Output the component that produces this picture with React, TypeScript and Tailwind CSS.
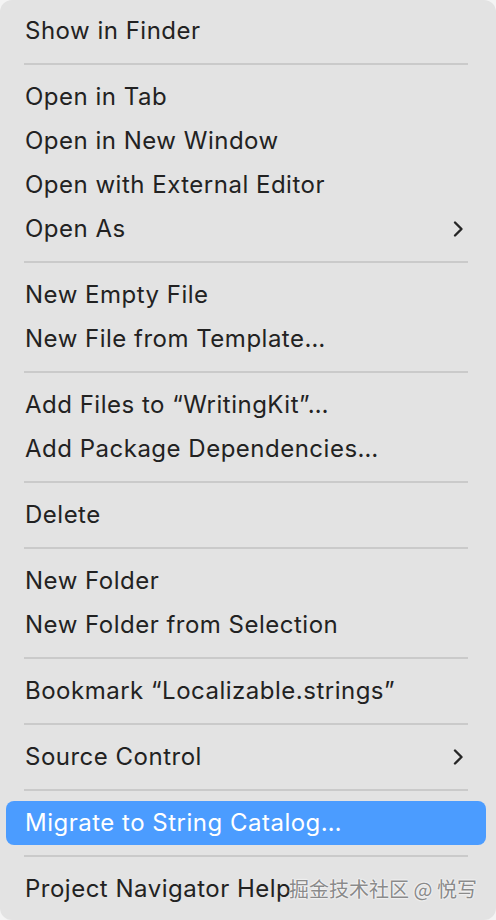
import { Fragment } from "react";

type Item = { label: string; submenu?: boolean; active?: boolean };

const groups: Item[][] = [
  [{ label: "Show in Finder" }],
  [
    { label: "Open in Tab" },
    { label: "Open in New Window" },
    { label: "Open with External Editor" },
    { label: "Open As", submenu: true },
  ],
  [{ label: "New Empty File" }, { label: "New File from Template…" }],
  [{ label: "Add Files to \u201cWritingKit\u201d…" }, { label: "Add Package Dependencies…" }],
  [{ label: "Delete" }],
  [{ label: "New Folder" }, { label: "New Folder from Selection" }],
  [{ label: "Bookmark \u201cLocalizable.strings\u201d" }],
  [{ label: "Source Control", submenu: true }],
  [{ label: "Migrate to String Catalog…", active: true }],
  [{ label: "Project Navigator Help" }],
];

function Chevron() {
  return (
    <svg width="12" height="18" viewBox="0 0 12 18" className="text-[#262626]">
      <path d="M3 2.5 L9.5 9 L3 15.5" fill="none" stroke="currentColor" strokeWidth="2.4" strokeLinecap="round" strokeLinejoin="round" />
    </svg>
  );
}

export default function App() {
  return (
    <div className="w-[496px] h-[920px] bg-[#f4f4f4] overflow-hidden">
      <div
        className="relative w-[496px] h-[920px] bg-[#e3e3e3] rounded-[12px] pt-[9px]"
        style={{ fontFamily: "Inter, 'Liberation Sans', sans-serif" }}
      >
        {groups.map((group, gi) => (
          <Fragment key={gi}>
            {gi > 0 && (
              <div className="h-[22px] flex items-center px-[24px]">
                <div className="w-[444px] h-[2px] bg-[#cacaca]" />
              </div>
            )}
            {group.map((item) => (
              <div
                key={item.label}
                className={`mx-[6px] h-[44px] w-[480px] rounded-[8px] flex items-center justify-between pl-[19px] pr-[22px] text-[24px] tracking-[0.5px] whitespace-nowrap ${
                  item.active ? "bg-[#4b9cff] text-white" : "text-[#222222]"
                }`}
              >
                <span>{item.label}</span>
                {item.submenu && <Chevron />}
              </div>
            ))}
          </Fragment>
        ))}

        <div
          className="absolute left-[289px] top-[874px] text-[20px] text-[#8a8a8a]"
          style={{
            fontFamily: "'Noto Sans CJK SC', sans-serif",
            textShadow: "0 0 2px #fff, 0 0 2px #fff",
          }}
        >
          掘金技术社区 @ 悦写
        </div>
      </div>
    </div>
  );
}
